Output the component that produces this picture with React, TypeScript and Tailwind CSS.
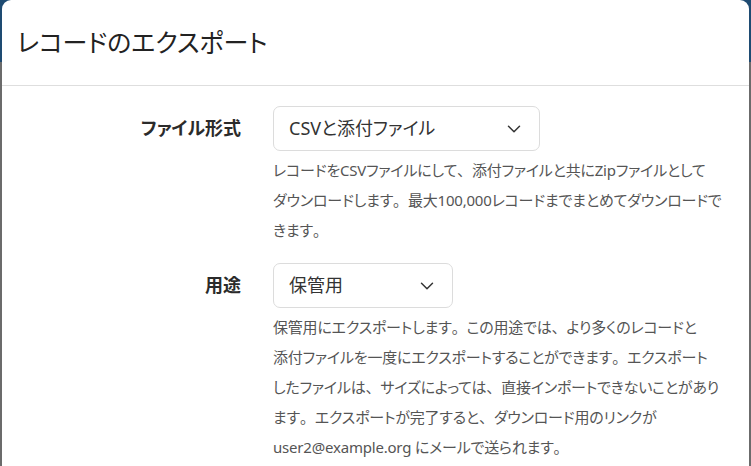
import { ChevronDown } from "lucide-react";

const font = "[font-family:'Noto_Sans','Noto_Sans_CJK_JP',sans-serif] [font-feature-settings:'palt']";

// keep 、。 full width like the reference, the rest proportional
function Punct({ text }: { text: string }) {
  return (
    <>
      {text.split(/([、。])/).map((part, i) =>
        part === "、" || part === "。" ? (
          <span key={i} className="[font-feature-settings:normal]">
            {part}
          </span>
        ) : (
          <span key={i}>{part}</span>
        )
      )}
    </>
  );
}

interface FieldRowProps {
  label: string;
  value: string;
  selectWidth: string;
  lines: string[];
}

function FieldRow({ label, value, selectWidth, lines }: FieldRowProps) {
  return (
    <div className="flex gap-[32px]">
      <div className="w-[239px] h-[45px] flex items-center justify-end shrink-0">
        <span className="text-[18px] font-bold text-[#2b2b2b]">{label}</span>
      </div>
      <div className="flex flex-col">
        <button
          className={`${selectWidth} h-[45px] flex items-center justify-between pl-[15px] pr-[14px] rounded-[7px] border border-[#dcdcdc] bg-white text-[18px] text-[#333]`}
        >
          <span>{value}</span>
          <ChevronDown className="w-[22px] h-[22px] text-[#333]" strokeWidth={1.6} />
        </button>
        <p className="mt-[4px] text-[15px] leading-[30px] text-[#555] tracking-[-0.2px]">
          {lines.map((line, i) => (
            <span key={i} className="block whitespace-nowrap">
              <Punct text={line} />
            </span>
          ))}
        </p>
      </div>
    </div>
  );
}

export default function App() {
  return (
    <div
      className={`relative w-[751px] h-[466px] overflow-hidden bg-[linear-gradient(to_bottom,#1e4b72_0,#1e4b72_62px,#6b6b6b_62px)] ${font}`}
    >
      <div className="absolute left-[2px] right-[2px] top-0 bottom-0 bg-white rounded-t-[9px] flex flex-col">
        {/* Header */}
        <div className="h-[86px] shrink-0 flex items-center pl-[15px] border-b border-[#dedede]">
          <h1 className="text-[25px] text-[#222]">レコードのエクスポート</h1>
        </div>

        {/* Body */}
        <div className="flex flex-col gap-[18px] pt-[20px]">
          <FieldRow
            label="ファイル形式"
            value="CSVと添付ファイル"
            selectWidth="w-[267px]"
            lines={[
              "レコードをCSVファイルにして、添付ファイルと共にZipファイルとして",
              "ダウンロードします。最大100,000レコードまでまとめてダウンロードで",
              "きます。",
            ]}
          />
          <FieldRow
            label="用途"
            value="保管用"
            selectWidth="w-[180px]"
            lines={[
              "保管用にエクスポートします。この用途では、より多くのレコードと",
              "添付ファイルを一度にエクスポートすることができます。エクスポート",
              "したファイルは、サイズによっては、直接インポートできないことがあり",
              "ます。エクスポートが完了すると、ダウンロード用のリンクが",
              "user2@example.org にメールで送られます。",
            ]}
          />
        </div>
      </div>
    </div>
  );
}
